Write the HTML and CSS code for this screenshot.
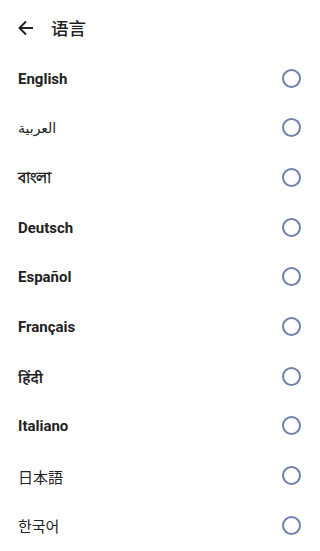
FILE: index.html
```html
<!DOCTYPE html>
<html lang="zh">
<head>
<meta charset="utf-8">
<link rel="stylesheet" href="styles.css">
</head>
<body>
<div class="screen">
  <header class="topbar">
    <svg class="back" width="17" height="16" viewBox="0 0 17 16"><path d="M16 8H2.5M9 1.5L2.5 8L9 14.5" fill="none" stroke="#1f1f1f" stroke-width="1.9" stroke-linecap="butt"/></svg>
    <h1 class="title">语言</h1>
  </header>
  <ul class="list">
    <li class="row"><span class="label">English</span><span class="radio"></span></li>
    <li class="row"><span class="label light" lang="ar">العربية</span><span class="radio"></span></li>
    <li class="row"><span class="label" lang="bn">বাংলা</span><span class="radio"></span></li>
    <li class="row"><span class="label">Deutsch</span><span class="radio"></span></li>
    <li class="row"><span class="label">Español</span><span class="radio"></span></li>
    <li class="row"><span class="label">Français</span><span class="radio"></span></li>
    <li class="row"><span class="label indic" lang="hi">हिंदी</span><span class="radio"></span></li>
    <li class="row"><span class="label">Italiano</span><span class="radio"></span></li>
    <li class="row"><span class="label cjk" lang="ja">日本語</span><span class="radio"></span></li>
    <li class="row"><span class="label cjk" lang="ko">한국어</span><span class="radio"></span></li>
  </ul>
</div>
</body>
</html>
```

FILE: styles.css
```css
html, body {
  margin: 0;
  padding: 0;
  background: #ffffff;
}
body {
  font-family: Roboto, "Noto Sans", "DejaVu Sans", "Noto Sans CJK SC", sans-serif;
  color: #1f1f1f;
}
.screen {
  width: 320px;
  height: 551px;
  overflow: hidden;
}
.topbar {
  height: 54px;
  display: flex;
  align-items: center;
  padding: 0 0 0 17px;
  box-sizing: border-box;
}
.back {
  display: block;
  margin-right: 17px;
  margin-top: 1px;
}
.title {
  margin: 0;
  font-family: "Noto Sans CJK SC", sans-serif;
  font-size: 17.5px;
  font-weight: 500;
  color: #1f1f1f;
  letter-spacing: 0;
}
.list {
  list-style: none;
  margin: 0;
  padding: 0;
}
.row {
  height: 49.67px;
  display: flex;
  align-items: center;
  justify-content: space-between;
  padding: 0 19px 0 18px;
  box-sizing: border-box;
}
.label {
  font-size: 15px;
  font-weight: 700;
  color: #222222;
}
.label.light {
  font-weight: 400;
  font-size: 14px;
}
.label.indic {
  font-weight: 600;
}
.label.cjk {
  font-family: "Noto Sans CJK JP", "Noto Sans CJK KR", sans-serif;
  font-weight: 400;
  font-size: 15px;
}
.radio {
  width: 19px;
  height: 19px;
  border: 2px solid #7080aa;
  border-radius: 50%;
  box-sizing: border-box;
  margin-top: -1px;
}
```
